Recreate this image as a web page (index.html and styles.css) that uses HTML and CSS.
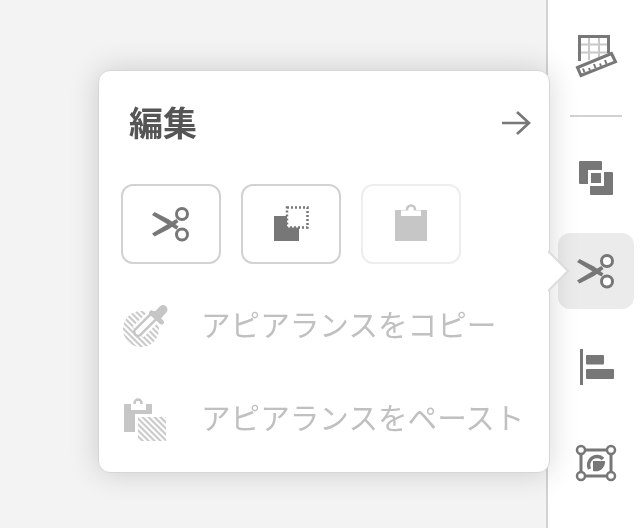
FILE: index.html
```html
<!DOCTYPE html>
<html lang="ja">
<head>
<meta charset="utf-8">
<title>編集</title>
<link rel="stylesheet" href="styles.css">
</head>
<body>
<svg class="defs" width="0" height="0" aria-hidden="true">
  <defs>
    <pattern id="hatch" width="4.2" height="4.2" patternUnits="userSpaceOnUse" patternTransform="rotate(45)">
      <rect width="4.2" height="2.1" fill="#c8c8c8"/>
    </pattern>
    <g id="scissors">
      <polygon points="1,11 3.500,8 18,15.500 27.500,22.500 25.500,25.500 16,20" fill="#777"/>
      <polygon points="1,29.500 3.500,32.500 18,25 27.500,18 25.500,15 16,20.500" fill="#777"/>
      <circle cx="31" cy="10" r="5.500" fill="#fff" stroke="#777" stroke-width="3"/>
      <circle cx="31" cy="30.500" r="5.500" fill="#fff" stroke="#777" stroke-width="3"/>
    </g>
  </defs>
</svg>
<div class="app">
  <main class="canvas"></main>
  <aside class="sidebar">
    <div class="tool">
      <svg width="48" height="48" viewBox="0 0 48 48">
        <path d="M17 5v24M27 5v22M7 13.500h30M7 21.500h30" fill="none" stroke="#c8c8c8" stroke-width="2"/>
        <path d="M7.500 30V5.500h29V22" fill="none" stroke="#777" stroke-width="3"/>
        <polygon points="5.500,36.500 39.500,22.500 43.500,30.800 9,44.500" fill="#fff" stroke="#777" stroke-width="3"/>
        <path d="M12.500 41.500l-1.500-4M18 39.500l-1-2.500M23.500 37l-1.500-4M29 35l-1-2.500M34.500 33l-1.500-4" fill="none" stroke="#777" stroke-width="2"/>
      </svg>
    </div>
    <hr class="rule">
    <div class="tool">
      <svg width="48" height="48" viewBox="0 0 48 48">
        <rect x="7" y="10" width="23" height="23" rx="1" fill="#777"/>
        <rect x="18" y="21" width="23" height="23" rx="1" fill="#777"/>
        <rect x="17.500" y="20.500" width="13" height="13" fill="#777" stroke="#fff" stroke-width="3"/>
      </svg>
    </div>
    <div class="tool tool-active">
      <svg width="40" height="40" viewBox="0 0 40 40"><use href="#scissors"/></svg>
    </div>
    <div class="tool">
      <svg width="48" height="48" viewBox="0 0 48 48">
        <rect x="8" y="6" width="3" height="36" fill="#777"/>
        <rect x="14" y="12" width="18" height="9.500" rx="1" fill="#777"/>
        <rect x="14" y="26" width="28" height="10" rx="1" fill="#777"/>
      </svg>
    </div>
    <div class="tool">
      <svg width="48" height="48" viewBox="0 0 48 48">
        <rect x="9" y="11" width="30" height="26" fill="none" stroke="#777" stroke-width="3"/>
        <circle cx="9" cy="11" r="4" fill="#fff" stroke="#777" stroke-width="2.500"/>
        <circle cx="39" cy="11" r="4" fill="#fff" stroke="#777" stroke-width="2.500"/>
        <circle cx="9" cy="37" r="4" fill="#fff" stroke="#777" stroke-width="2.500"/>
        <circle cx="39" cy="37" r="4" fill="#fff" stroke="#777" stroke-width="2.500"/>
        <path d="M17.500 30A8.500 8.500 0 0 1 31 20" fill="none" stroke="#777" stroke-width="3.500"/>
        <path d="M21 22h12a9.500 9.500 0 0 1-12 10z" fill="#777"/>
      </svg>
    </div>
  </aside>

  <section class="popover">
    <header class="popover-head">
      <h1 class="popover-title">編集</h1>
      <svg class="head-arrow" width="32" height="28" viewBox="0 0 32 28">
        <path d="M1 14h27M16 3l12 11-12 11" fill="none" stroke="#777" stroke-width="2.600"/>
      </svg>
    </header>
    <div class="actions">
      <button class="action">
        <svg width="40" height="40" viewBox="0 0 40 40"><use href="#scissors"/></svg>
      </button>
      <button class="action">
        <svg width="40" height="40" viewBox="0 0 40 40">
          <rect x="3" y="12" width="25" height="25" fill="#777"/>
          <rect x="16" y="3.500" width="20.500" height="20" fill="#fff" stroke="#777" stroke-width="2.500" stroke-dasharray="2 2"/>
        </svg>
      </button>
      <button class="action action-off">
        <svg width="40" height="40" viewBox="0 0 40 40">
          <rect x="4" y="6" width="32" height="31" fill="#c6c6c6"/>
          <circle cx="20" cy="5.500" r="4" fill="#fff" stroke="#c6c6c6" stroke-width="2.500"/>
          <rect x="10" y="6.500" width="20" height="5.500" fill="#fff"/>
        </svg>
      </button>
    </div>
    <div class="row">
      <svg class="row-icon" width="48" height="48" viewBox="0 0 48 48">
        <circle cx="20" cy="28" r="18" fill="url(#hatch)"/>
        <path d="M17 31l16-16" stroke="#fff" stroke-width="15" fill="none"/>
        <path d="M17 31l16-16" stroke="#c6c6c6" stroke-width="10" fill="none" stroke-linecap="round"/>
        <path d="M17 31l16-16" stroke="#fff" stroke-width="5" fill="none" stroke-linecap="round"/>
        <path d="M30.500 12l10 9" stroke="#c6c6c6" stroke-width="5" stroke-linecap="round"/>
        <path d="M37 14l5-5.500" stroke="#c6c6c6" stroke-width="9" stroke-linecap="round"/>
      </svg>
      <span class="row-label">アピアランスをコピー</span>
    </div>
    <div class="row row-paste">
      <svg class="row-icon" width="48" height="48" viewBox="0 0 48 48">
        <rect x="3" y="10" width="28" height="28" fill="#c6c6c6"/>
        <circle cx="17" cy="9" r="3.500" fill="#fff" stroke="#c6c6c6" stroke-width="2.500"/>
        <rect x="10" y="10" width="15" height="6" fill="#fff"/>
        <rect x="14" y="20" width="34" height="28" fill="#fff"/>
        <rect x="17" y="23" width="28" height="24" fill="url(#hatch)"/>
      </svg>
      <span class="row-label">アピアランスをペースト</span>
    </div>
  </section>

  <svg class="pointer" width="22" height="42" viewBox="0 0 22 42">
    <polygon points="0,1 20,21 0,41" fill="#fff"/>
    <path d="M0 1l20 20L0 41" fill="none" stroke="#dcdcdc" stroke-width="2"/>
  </svg>
</div>
</body>
</html>
```
FILE: styles.css
```css
* { box-sizing: border-box; }
html, body { margin: 0; padding: 0; height: 100%; }
body { font-family: "Noto Sans CJK JP", "Noto Sans", sans-serif; background: #fff; overflow: hidden; }
.defs { position: absolute; }
.app { position: relative; display: flex; width: 644px; height: 528px; }
.canvas { width: 546px; background: #f3f3f3; }
.sidebar {
  width: 98px;
  border-left: 2px solid #d2d2d2;
  background: #fff;
  display: flex;
  flex-direction: column;
  align-items: center;
  padding: 17px 0 0;
}
.tool {
  width: 76px;
  height: 76px;
  flex: none;
  display: flex;
  align-items: center;
  justify-content: center;
  border-radius: 12px;
  margin-bottom: 20px;
}
.tool-active { background: #ebebeb; }
.rule {
  width: 52px;
  height: 2px;
  flex: none;
  margin: 2px 0 20px;
  border: 0;
  background: #d2d2d2;
  align-self: center;
}
.popover {
  position: absolute;
  left: 98px;
  top: 70px;
  width: 452px;
  height: 403px;
  background: #fff;
  border: 1px solid #d6d6d6;
  border-radius: 12px;
  box-shadow: 0 0 30px rgba(0, 0, 0, 0.16);
  padding: 0 22px;
  display: flex;
  flex-direction: column;
  will-change: transform;
}
.popover-head {
  display: flex;
  align-items: center;
  justify-content: space-between;
  height: 113px;
  flex: none;
  padding: 0 0 10px 8px;
}
.popover-title { margin: 0 0 2px; font-size: 34px; font-weight: 700; color: #555; line-height: 1; }
.head-arrow { margin-right: -6px; }
.actions { display: flex; gap: 20px; flex: none; }
.action {
  width: 100px;
  height: 80px;
  padding: 0;
  background: #fff;
  border: 2px solid #d2d2d2;
  border-radius: 12px;
  display: flex;
  align-items: center;
  justify-content: center;
}
.action-off { border-color: #eeeeee; }
.row { display: flex; align-items: center; gap: 32px; height: 48px; margin-top: 37px; flex: none; }
.row-paste { margin-top: 45px; }
.row-label { font-size: 29.6px; font-weight: 400; color: #c0c0c0; line-height: 1; white-space: nowrap; padding-bottom: 3px; }
.row-icon { flex: none; }
.pointer { position: absolute; left: 548px; top: 250px; }
```
